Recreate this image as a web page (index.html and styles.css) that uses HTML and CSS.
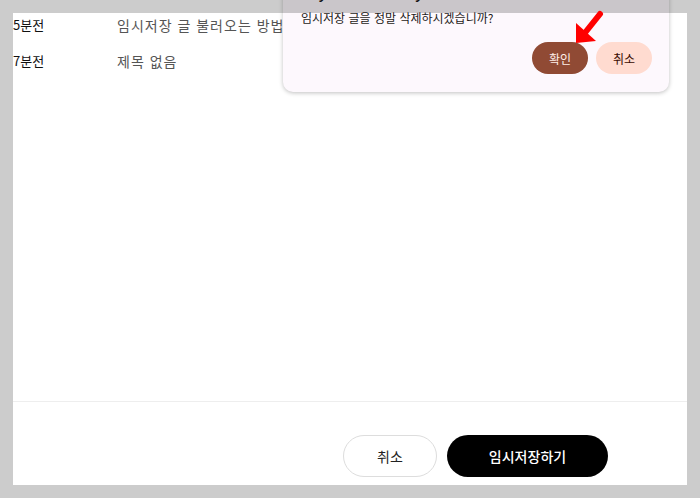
FILE: index.html
```html
<!DOCTYPE html>
<html lang="ko">
<head>
  <meta charset="UTF-8">
  <meta name="viewport" content="width=device-width, initial-scale=1.0">
  <title>임시저장</title>
  <link rel="stylesheet" href="styles.css">
</head>
<body>
  <div class="sheet">
    <div class="draft-list">
      <div class="draft-row">
        <span class="draft-time">5분전</span>
        <span class="draft-title">임시저장 글 불러오는 방법</span>
      </div>
      <div class="draft-row">
        <span class="draft-time">7분전</span>
        <span class="draft-title">제목 없음</span>
      </div>
    </div>

    <div class="sheet-footer">
      <button type="button" class="btn btn-outline">취소</button>
      <button type="button" class="btn btn-dark">임시저장하기</button>
    </div>
  </div>

  <div class="dialog">
    <div class="dialog-title">My draft story</div>
    <p class="dialog-text">임시저장 글을 정말 삭제하시겠습니까?</p>
    <div class="dialog-actions">
      <button type="button" class="pill pill-confirm">확인</button>
      <button type="button" class="pill pill-cancel">취소</button>
    </div>
  </div>

  <svg class="pointer" width="40" height="40" viewBox="0 0 40 40">
    <line x1="30" y1="6" x2="14" y2="26" stroke="#ff0000" stroke-width="6" stroke-linecap="round"/>
    <polygon points="6,35 6,15 26,33" fill="#ff0000"/>
  </svg>
</body>
</html>
```

FILE: styles.css
```css
body {
  margin: 0;
  padding: 13px;
  height: 498px;
  box-sizing: border-box;
  background-color: #cccccc;
  font-family: "Noto Sans CJK KR", "Noto Sans", sans-serif;
  overflow: hidden;
}

.sheet {
  height: 472px;
  background: #ffffff;
  display: flex;
  flex-direction: column;
}

.draft-list {
  flex: 1;
}

.draft-row {
  display: flex;
  line-height: 24px;
  padding-bottom: 12px;
}

.draft-time {
  width: 104px;
  font-size: 13px;
  font-weight: 400;
  color: #111;
}

.draft-title {
  font-size: 14px;
  font-weight: 400;
  letter-spacing: 1px;
  color: #555;
}

.sheet-footer {
  border-top: 1px solid #eeeeee;
  display: flex;
  justify-content: flex-end;
  gap: 10px;
  padding: 33px 79px 8px 0;
}

.btn {
  height: 42px;
  border-radius: 21px;
  font-family: inherit;
  font-size: 14px;
  cursor: pointer;
}

.btn-outline {
  width: 94px;
  background: #fff;
  border: 1px solid #dddddd;
  color: #222;
}

.btn-dark {
  width: 161px;
  background: #000;
  border: none;
  color: #fff;
  font-weight: 500;
}

.dialog {
  position: absolute;
  left: 283px;
  top: -21px;
  width: 386px;
  box-sizing: border-box;
  padding: 0 17px 18px 18px;
  background: #fdf8fd;
  border-radius: 10px;
  box-shadow: 0 1px 4px rgba(0, 0, 0, 0.25);
}

.dialog::after {
  content: "";
  position: absolute;
  left: 0;
  right: 0;
  top: 0;
  height: 34px;
  background: rgba(0, 0, 0, 0.2);
}

.dialog-title {
  font-size: 20px;
  line-height: 24px;
  color: #1d1b20;
  font-family: "Roboto", sans-serif;
}

.dialog-text {
  margin: 6px 0 0;
  font-size: 12px;
  line-height: 18px;
  color: #1d1b20;
}

.dialog-actions {
  display: flex;
  justify-content: flex-end;
  gap: 8px;
  margin-top: 15px;
}

.pill {
  height: 32px;
  width: 56px;
  border: none;
  border-radius: 16px;
  font-family: inherit;
  font-size: 12px;
  cursor: pointer;
}

.pill-confirm {
  background: #904a34;
  color: #ffeee8;
}

.pill-cancel {
  background: #ffdbd0;
  color: #3a0b00;
}

.pointer {
  position: absolute;
  left: 570px;
  top: 8px;
}
```
